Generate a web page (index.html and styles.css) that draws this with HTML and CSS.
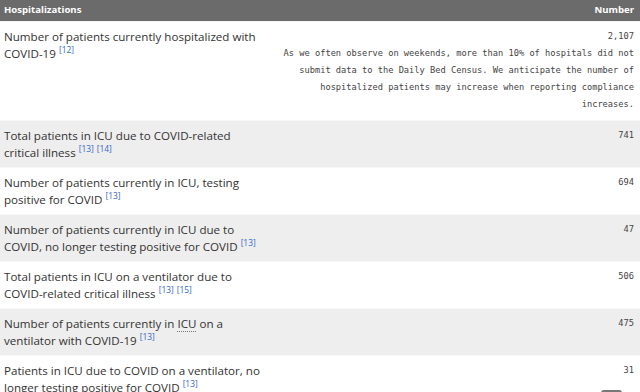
FILE: index.html
```html
<!DOCTYPE html>
<html lang="en">
<head>
    <meta charset="UTF-8">
    <meta name="viewport" content="width=device-width, initial-scale=1.0">
    <title>Hospitalizations</title>
    <link rel="stylesheet" href="styles.css">
</head>
<body>

<table class="stats-table">
    <thead>
        <tr>
            <th class="label-col">Hospitalizations</th>
            <th class="value-col">Number</th>
        </tr>
    </thead>
    <tbody>
        <tr>
            <td class="label-col">Number of patients currently hospitalized with COVID-19 <sup class="ref">[12]</sup></td>
            <td class="value-col">2,107
                <p class="note">As we often observe on weekends, more than 10% of hospitals did not submit data to the Daily Bed Census. We anticipate the number of hospitalized patients may increase when reporting compliance increases.</p>
            </td>
        </tr>
        <tr>
            <td class="label-col">Total patients in ICU due to COVID-related critical illness <sup class="ref">[13]</sup> <sup class="ref">[14]</sup></td>
            <td class="value-col">741</td>
        </tr>
        <tr>
            <td class="label-col">Number of patients currently in ICU, testing positive for COVID <sup class="ref">[13]</sup></td>
            <td class="value-col">694</td>
        </tr>
        <tr>
            <td class="label-col">Number of patients currently in ICU due to COVID, no longer testing positive for COVID <sup class="ref">[13]</sup></td>
            <td class="value-col">47</td>
        </tr>
        <tr>
            <td class="label-col">Total patients in ICU on a ventilator due to COVID-related critical illness <sup class="ref">[13]</sup> <sup class="ref">[15]</sup></td>
            <td class="value-col">506</td>
        </tr>
        <tr>
            <td class="label-col">Number of patients currently in <abbr title="Intensive Care Unit">ICU</abbr> on a ventilator with COVID-19 <sup class="ref">[13]</sup></td>
            <td class="value-col">475</td>
        </tr>
        <tr>
            <td class="label-col">Patients in ICU due to COVID on a ventilator, no longer testing positive for COVID <sup class="ref">[13]</sup></td>
            <td class="value-col">31<span class="tag"></span></td>
        </tr>
    </tbody>
</table>

</body>
</html>
```

FILE: styles.css
```css
/* Basic reset */
* {
    margin: 0;
    padding: 0;
    box-sizing: border-box;
}

body {
    font-family: 'Open Sans', 'Noto Sans', sans-serif;
    background-color: #fff;
    color: #333;
}

/* Table */
.stats-table {
    width: 640px;
    border-collapse: collapse;
}

.stats-table th {
    background-color: #6b6b6b;
    color: #fff;
    font-size: 9.6px;
    font-weight: bold;
    height: 21px;
    padding: 0 6px 2px 4px;
    line-height: 19px;
}

.stats-table th.label-col {
    text-align: left;
}

.stats-table th.value-col {
    text-align: right;
}

.stats-table td {
    vertical-align: top;
    border-top: 1px solid #f7f7f7;
}

.stats-table tbody tr:nth-child(even) {
    background-color: #eeeeee;
}

.label-col {
    width: 272px;
}

td.label-col {
    font-size: 11.6px;
    line-height: 17px;
    padding: 6px 4px 6px 4px;
    color: #333;
}

td.value-col {
    text-align: right;
    font-family: 'DejaVu Sans Mono', 'Liberation Mono', monospace;
    font-size: 8.7px;
    line-height: 17px;
    color: #444;
    padding: 6px 6px 6px 4px;
    position: relative;
}

/* Note below a number */
.note {
    text-align: right;
    color: #444;
    margin-bottom: 1px;
}

/* Footnote references */
.ref {
    font-size: 8.4px;
    line-height: 0;
    color: #3366cc;
    vertical-align: 5px;
}

abbr {
    text-decoration: none;
    border-bottom: 1px dotted #777;
}

/* Small tab peeking at the bottom edge */
.tag {
    position: absolute;
    right: 18px;
    top: 34px;
    width: 21px;
    height: 12px;
    border-radius: 3px;
    background-color: #777;
}
```
